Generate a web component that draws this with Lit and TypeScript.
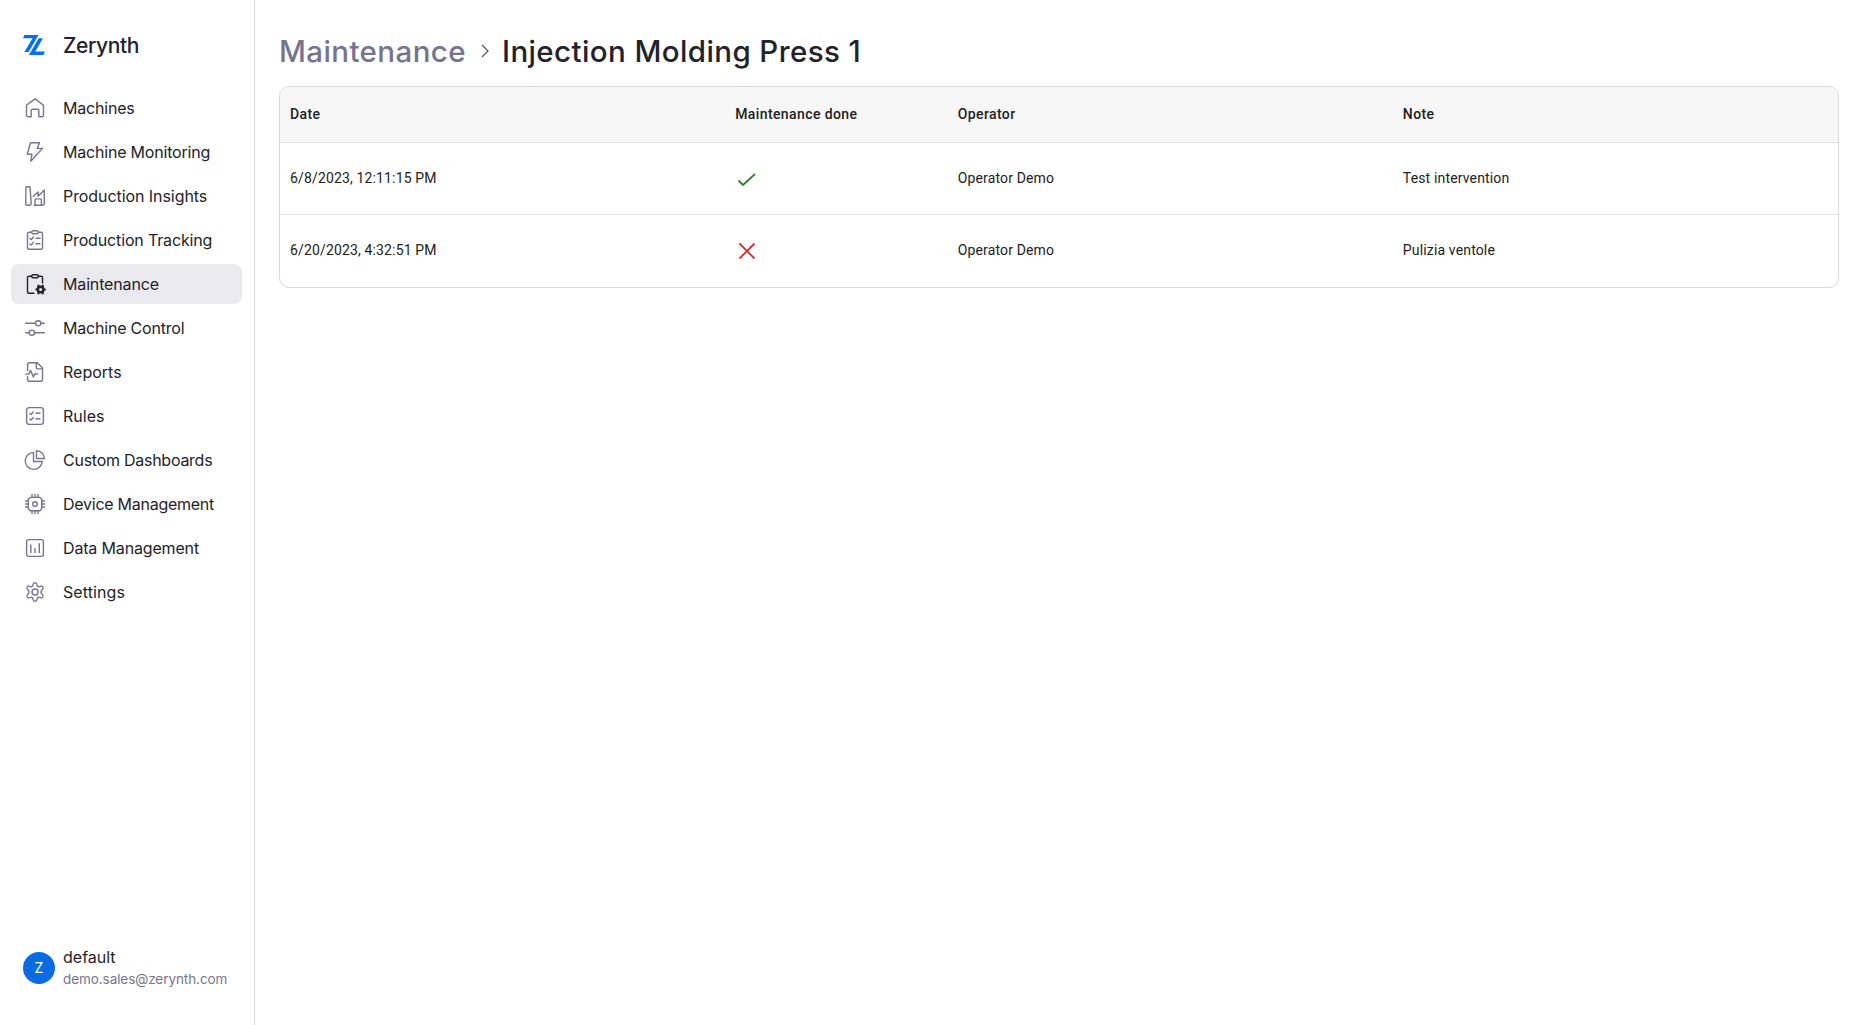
import { LitElement, html, svg, css } from "lit";
import { customElement, property } from "lit/decorators.js";
import { styleMap } from "lit/directives/style-map.js";

const icons: Record<string, unknown> = {
  home: svg`<path d="M1.500 7.300 10 .9l8.500 6.400V17.200a1.500 1.500 0 0 1-1.500 1.500h-3.200v-6.200a1.300 1.300 0 0 0-1.300-1.300h-5a1.300 1.300 0 0 0-1.300 1.300v6.200H3a1.500 1.500 0 0 1-1.500-1.500Z"/>`,
  bolt: svg`<path d="M6.200.8h8.300l-2.300 5.600h5.300L5.700 19.300l1.200-7H2.400L5.200 1.500Q5.400.8 6.200.8Z"/>`,
  factory: svg`<path d="M1.900.8h2.300a.9.9 0 0 1 .9.800l1.100 16.200q0 1.400-1.400 1.400H2q-1.300 0-1.300-1.300L1 1.600A.9.9 0 0 1 1.900.8Z"/><path d="m8.300 10.300 4.800-4.300v4.300l6.200-6.200v13.700a1.400 1.400 0 0 1-1.400 1.400H9.300"/><path d="M10 19.200v-5.300a1 1 0 0 1 1-1h4.400a1 1 0 0 1 1 1v5.300"/>`,
  clipboard: svg`<path d="M6.700 2.200H4a1.500 1.500 0 0 0-1.500 1.500v14.100A1.500 1.500 0 0 0 4 19.300h12a1.500 1.500 0 0 0 1.500-1.500V3.700A1.500 1.500 0 0 0 16 2.200h-2.700"/><path d="M8 .8h4a1.300 1.300 0 0 1 1.300 1.400v.3A1.300 1.300 0 0 1 12 3.800H8a1.300 1.300 0 0 1-1.300-1.300v-.3A1.300 1.300 0 0 1 8 .8Z"/><path d="m5 8.600 1.300 1L8.400 7M11 8.300h4M5 14l1.300 1 2.100-2.600M11 13.800h4"/>`,
  maintenance: svg`<path d="M6.700 2.200H4a1.500 1.500 0 0 0-1.500 1.500v14.100A1.500 1.500 0 0 0 4 19.300h5M13.300 2.200H16a1.500 1.500 0 0 1 1.500 1.500V9"/><path d="M8 .8h4a1.300 1.300 0 0 1 1.300 1.400v.3A1.300 1.300 0 0 1 12 3.800H8a1.300 1.300 0 0 1-1.300-1.300v-.3A1.300 1.300 0 0 1 8 .8Z"/><circle cx="15.600" cy="15.500" r="2.800" stroke-width="2.400"/><path d="M13.400 10.700v2M17.800 10.700v2M13.400 18.300v2M17.800 18.300v2M10.500 15.500h2M18.700 15.500h2" stroke-width="2.100" stroke-linecap="butt"/>`,
  sliders: svg`<path d="M.7 5.300h9.800M15.800 5.300h3.500M.7 14.700h3.600M9.500 14.700h9.800"/><circle cx="13.200" cy="5.300" r="2.600"/><circle cx="6.900" cy="14.700" r="2.600"/>`,
  report: svg`<path d="M2.600 8.500V2.300A1.500 1.500 0 0 1 4.100.8h8.200l5.200 5.100v11.900a1.500 1.500 0 0 1-1.500 1.500H4.100a1.500 1.500 0 0 1-1.500-1.500v-3.200"/><path d="M11.300 1.200v4.400q0 1.300 1.300 1.300h4.600M.7 12.100h3.100L5.500 8.400l2.800 6.500 1.900-3.400.8.600h1.900"/>`,
  rules: svg`<rect x="1.600" y="1.600" width="16.800" height="16.800" rx="2.600"/><path d="m4.800 7.500 1.300 1L8.300 6M11 7.300h4M4.800 13l1.300 1 2.200-2.500M11 12.800h4"/>`,
  pie: svg`<path d="M8.500 2.400a8.500 8.500 0 1 0 8.700 9.100H8.500Z"/><path d="M11.500.7a8 8 0 0 1 7.900 7.800h-7.900Z"/>`,
  chip: svg`<path d="M5.200 3.400h9.600l1.900 1.900v9.500l-1.900 1.900H5.200l-1.900-1.900V5.300Z"/><circle cx="10" cy="10" r="2.300"/><path d="M7 .5v2.900M10 .5v2.900M13 .5v2.900M7 16.700v2.800M10 16.700v2.800M13 16.700v2.800M.5 7h2.800M.5 10h2.800M.5 13h2.800M16.700 7h2.800M16.700 10h2.800M16.700 13h2.800"/>`,
  chart: svg`<rect x="1.600" y="1.600" width="16.800" height="16.800" rx="1.800"/><path d="M5.800 7v7.500M10 10.700v3.800M14.300 5.700v8.800"/>`,
  gear: svg`<circle cx="10" cy="10" r="3"/><path d="M8.300 1.900Q8.700.7 10 .7t1.700 1.200l.5 1.600a1.700 1.700 0 0 0 2 1.100l1.700-.4a1.750 1.750 0 0 1 1.700 2.900l-1.200 1.700a1.700 1.700 0 0 0 0 2.400l1.200 1.700a1.750 1.750 0 0 1-1.700 2.900l-1.700-.4a1.700 1.700 0 0 0-2 1.100l-.5 1.600q-.4 1.200-1.700 1.200t-1.700-1.200l-.5-1.600a1.700 1.700 0 0 0-2-1.100l-1.700.4a1.750 1.750 0 0 1-1.700-2.900l1.200-1.700a1.700 1.700 0 0 0 0-2.400L2.400 7.100a1.750 1.750 0 0 1 1.700-2.900l1.700.4a1.700 1.700 0 0 0 2-1.100Z"/>`,
};

interface NavEntry { icon: string; label: string; tracking: number; }
interface Intervention { date: string; done: boolean; operator: string; note: string; }

const navigation: NavEntry[] = [
  { icon: "home", label: "Machines", tracking: -0.2 },
  { icon: "bolt", label: "Machine Monitoring", tracking: -0.2 },
  { icon: "factory", label: "Production Insights", tracking: -0.07 },
  { icon: "clipboard", label: "Production Tracking", tracking: -0.15 },
  { icon: "maintenance", label: "Maintenance", tracking: -0.15 },
  { icon: "sliders", label: "Machine Control", tracking: -0.2 },
  { icon: "report", label: "Reports", tracking: 0 },
  { icon: "rules", label: "Rules", tracking: 0 },
  { icon: "pie", label: "Custom Dashboards", tracking: -0.26 },
  { icon: "chip", label: "Device Management", tracking: -0.26 },
  { icon: "chart", label: "Data Management", tracking: -0.16 },
  { icon: "gear", label: "Settings", tracking: 0.1 },
];

const interventions: Intervention[] = [
  { date: "6/8/2023, 12:11:15 PM", done: true, operator: "Operator Demo", note: "Test intervention" },
  { date: "6/20/2023, 4:32:51 PM", done: false, operator: "Operator Demo", note: "Pulizia ventole" },
];

@customElement("side-nav")
class SideNav extends LitElement {
  @property() active = "Maintenance";

  static styles = css`
    :host { display: flex; flex-direction: column; box-sizing: border-box; width: 255px; height: 100%; padding: 24px 12px 35px 11px; border-right: 1px solid #d4d3dd; }
    .brand { display: flex; align-items: center; height: 42px; padding-left: 12px; margin-bottom: 22px; font-size: 21px; font-weight: 500; letter-spacing: -0.4px; }
    .logo { width: 22px; height: 20px; margin-right: 18px; }
    nav { display: flex; flex-direction: column; gap: 4px; }
    .item { display: flex; align-items: center; gap: 18px; height: 40px; padding-left: 14px; border-radius: 8px; font-size: 16px; white-space: nowrap; }
    .icon { width: 20px; height: 20px; flex: none; overflow: visible; fill: none; stroke: #77748f; stroke-width: 1.4; stroke-linecap: round; stroke-linejoin: round; }
    .active { background: #eae9ee; }
    .active .icon { stroke: #23222b; }
    .account { display: flex; align-items: center; gap: 8px; margin-top: auto; padding-left: 12px; }
    .avatar { display: flex; align-items: center; justify-content: center; width: 32px; height: 32px; border-radius: 50%; background: #0b6be0; color: #fff; font-size: 14px; }
    .name { font-size: 16px; line-height: 24px; }
    .mail { color: #77748f; font-size: 13.5px; line-height: 21px; letter-spacing: -0.07px; }
  `;

  render() {
    return html`
      <div class="brand">
        <svg class="logo" viewBox="0 0 22 20" fill="#0071f5"><path d="M1.500 0H15.600L5.600 17H1.400L9.500 3.300H0ZM15.700 3.300H20L12.200 16.500H22L20.500 20H5.900Z"/></svg>
        <span>Zerynth</span>
      </div>
      <nav>
        ${navigation.map((entry) => html`
          <div class="item ${entry.label === this.active ? "active" : ""}">
            <svg class="icon" viewBox="0 0 20 20">${icons[entry.icon]}</svg>
            <span style=${styleMap({ letterSpacing: `${entry.tracking}px` })}>${entry.label}</span>
          </div>`)}
      </nav>
      <div class="account">
        <div class="avatar">Z</div>
        <div><div class="name">default</div><div class="mail">demo.sales@zerynth.com</div></div>
      </div>`;
  }
}

@customElement("app-root")
class AppRoot extends LitElement {
  static styles = css`
    :host { display: grid; grid-template-columns: 255px 1fr; height: 100vh; background: #fff; color: #23222b; font-family: Inter, "Liberation Sans", sans-serif; }
    main { padding: 27px 24px 0; }
    .crumbs { display: flex; align-items: center; height: 48px; margin-bottom: 11px; font-size: 29.5px; font-weight: 500; letter-spacing: 0.4px; white-space: nowrap; }
    .parent { color: #77748f; }
    .chevron { width: 8px; height: 14px; margin: 0 13px 0 15px; fill: none; stroke: #55545c; stroke-width: 1.2; }
    .table { border: 1px solid #d9d9de; border-radius: 10px; overflow: hidden; font: 14px/20px Roboto, sans-serif; letter-spacing: 0.15px; color: #212121; }
    .row { display: grid; grid-template-columns: 2fr 1fr 2fr 2fr; align-items: center; height: 72px; box-sizing: border-box; padding-bottom: 2px; border-top: 1px solid #e0e0e0; }
    .row:last-child { height: 73px; padding-bottom: 3px; }
    .row > div { padding: 0 10px; }
    .head { height: 55px; border-top: 0; background: #f7f7f7; font-weight: 500; letter-spacing: 0.4px; }
    .status { display: block; width: 24px; height: 24px; fill: none; stroke-width: 1.8; }
    .yes { stroke: #2e7d32; }
    .no { stroke: #d32f2f; }
  `;

  render() {
    return html`
      <side-nav></side-nav>
      <main>
        <div class="crumbs">
          <span class="parent">Maintenance</span>
          <svg class="chevron" viewBox="0 0 8 14"><path d="m1 1 6 6-6 6"/></svg>
          <span class="title">Injection Molding Press 1</span>
        </div>
        <div class="table">
          <div class="row head"><div>Date</div><div>Maintenance done</div><div>Operator</div><div>Note</div></div>
          ${interventions.map((item) => html`
            <div class="row">
              <div>${item.date}</div>
              <div>${item.done
                ? html`<svg class="status yes" viewBox="0 0 24 24"><path d="m3.500 14.500 4.500 4.500L20 8"/></svg>`
                : html`<svg class="status no" viewBox="0 0 24 24"><path d="m4.500 5.500 15 15M19.500 5.500l-15 15"/></svg>`}</div>
              <div>${item.operator}</div>
              <div>${item.note}</div>
            </div>`)}
        </div>
      </main>`;
  }
}
